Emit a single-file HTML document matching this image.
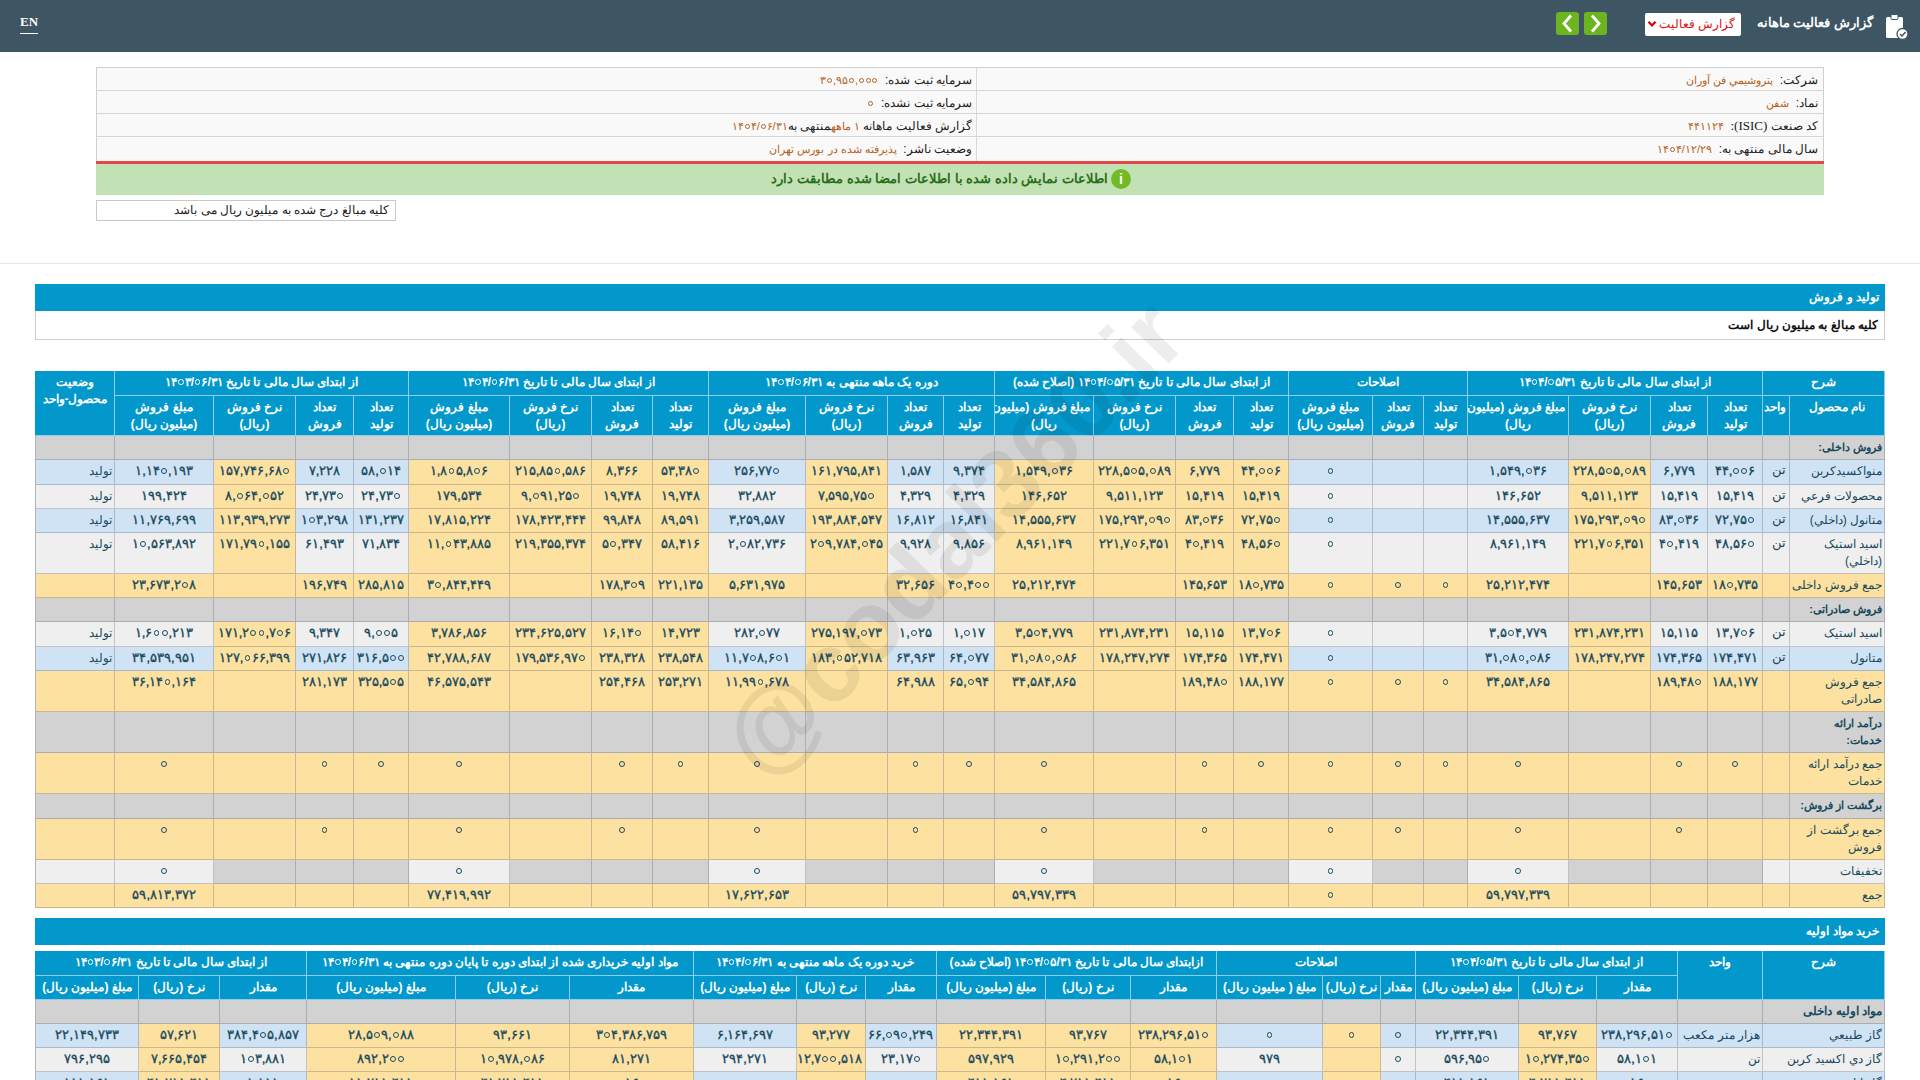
<!DOCTYPE html>
<html lang="fa" dir="rtl"><head><meta charset="utf-8"><title>گزارش فعالیت ماهانه</title>
<style>
*{box-sizing:border-box;margin:0;padding:0}
html,body{width:1920px;height:1080px;overflow:hidden;background:#fff;font-family:"Liberation Sans",sans-serif;}
body{position:relative}
.a{position:absolute}
.c{position:absolute;border-right:1px solid rgba(70,70,95,0.27);border-bottom:1px solid rgba(70,70,95,0.27);overflow:hidden;color:#184a5e;font-size:13px;line-height:17px;padding:3px 3px 0 3px;white-space:nowrap}
.c.h{background:#0398cc;color:#fff;font-weight:bold;border-color:#8fcdea;padding-top:3px;font-size:12px}
.c.n{font-size:13px;font-weight:normal;-webkit-text-stroke:0.35px currentColor;padding-top:2px}
.c.nm{padding-right:2px;font-size:12px}
.c.b{font-weight:bold}
.c.s11{font-size:11px}
.c.u{font-size:13px;padding:1px 3px 0 0;text-align:right!important}
#hdr{left:0;top:0;width:1920px;height:52px;background:#3e5563}
.info{background:#f9f9f9;border:1px solid #cfcfcf}
.ir{position:absolute;height:23px;border-bottom:1px solid #d6d6d6;font-size:13px;line-height:22px;color:#222;white-space:nowrap}
.v{color:#b5611c;font-size:11px}
i.z{display:inline-block;width:.46em;height:.46em;border:.145em solid currentColor;border-radius:50%;margin:0 .08em;vertical-align:.11em}
.it{font-size:12px;line-height:22px;color:#222;white-space:nowrap}
</style></head><body>
<div id="hdr" class="a"></div>
<div class="a" style="left:20px;top:15px;color:#fff;font-family:'Liberation Serif',serif;font-size:13px;font-weight:bold;line-height:14px;padding-bottom:4px;border-bottom:1px solid #fff">EN</div>
<div class="a" style="right:47px;top:13px;color:#fff;font-size:13px;line-height:20px;font-weight:bold;white-space:nowrap">گزارش فعالیت ماهانه</div>
<div class="a" style="left:1645px;top:13px;width:96px;height:23px;background:#fff;border-radius:2px"></div><div class="a" style="right:185px;top:13px;color:#e01010;font-size:12px;line-height:22px;white-space:nowrap">گزارش فعالیت</div>
<svg class="a" style="left:1647px;top:20px" width="10" height="8"><path d="M1.5 1.8 L5 5.5 L8.5 1.8" stroke="#d40000" stroke-width="2.2" fill="none"/></svg>
<div class="a" style="left:1556px;top:12px;width:23px;height:23px;background:#6cb521;border-radius:3px"><svg width="23" height="23"><path d="M15 3.5 L8 11.5 L15 19.5" stroke="#fff" stroke-width="2.8" fill="none"/></svg></div>
<div class="a" style="left:1584px;top:12px;width:23px;height:23px;background:#6cb521;border-radius:3px"><svg width="23" height="23"><path d="M8 3.5 L15 11.5 L8 19.5" stroke="#fff" stroke-width="2.8" fill="none"/></svg></div>
<svg class="a" style="left:1884px;top:13px" width="26" height="28"><rect x="2" y="4" width="17" height="21" rx="1.5" fill="#fff"/><rect x="7" y="1.5" width="7" height="5" rx="1" fill="#fff" stroke="#3e5563" stroke-width="1"/><circle cx="18.5" cy="21" r="5.5" fill="#fff" stroke="#3e5563" stroke-width="1.3"/><path d="M16 21 L18 23 L21.5 19" stroke="#3e5563" stroke-width="1.5" fill="none"/></svg>

<!-- info box -->
<div class="a info" style="left:96px;top:67px;width:1728px;height:95px"></div>
<div class="a" style="left:976px;top:68px;width:1px;height:93px;background:#d9d9d9"></div>
<div class="ir" style="left:97px;top:68px;width:1726px"></div>
<div class="ir" style="left:97px;top:91px;width:1726px"></div>
<div class="ir" style="left:97px;top:114px;width:1726px"></div>
<div class="a it" style="right:102px;top:69px">شرکت: &nbsp;<span class="v">پتروشيمي فن آوران</span></div>
<div class="a it" style="right:102px;top:92px">نماد: &nbsp;<span class="v">شفن</span></div>
<div class="a it" style="right:102px;top:115px">کد صنعت <span style="font-family:'Liberation Serif',serif;font-size:13px">(ISIC):</span> &nbsp;<span class="v">۴۴۱۱۲۴</span></div>
<div class="a it" style="right:102px;top:138px">سال مالی منتهی به: &nbsp;<span class="v"><bdo dir="ltr">۱۴<i class="z"></i>۴/۱۲/۲۹</bdo></span></div>
<div class="a it" style="right:948px;top:69px">سرمایه ثبت شده: &nbsp;<span class="v"><bdo dir="ltr">۳<i class="z"></i>,۹۵<i class="z"></i>,<i class="z"></i><i class="z"></i><i class="z"></i></bdo></span></div>
<div class="a it" style="right:948px;top:92px">سرمایه ثبت نشده: &nbsp;<span class="v"><bdo dir="ltr"><i class="z"></i></bdo></span></div>
<div class="a it" style="right:948px;top:115px">گزارش فعالیت ماهانه <span class="v">۱ ماهه</span>منتهی به<span class="v"><bdo dir="ltr">۱۴<i class="z"></i>۴/<i class="z"></i>۶/۳۱</bdo></span></div>
<div class="a it" style="right:948px;top:138px">وضعیت ناشر: &nbsp;<span class="v">پذیرفته شده در بورس تهران</span></div>
<div class="a" style="left:96px;top:161px;width:1728px;height:3px;background:#e24848"></div>
<div class="a" style="left:96px;top:164px;width:1728px;height:31px;background:#c2e1b5"></div>
<div class="a" style="left:1111px;top:169px;width:20px;height:20px;border-radius:50%;background:#72bb22;color:#fff;font-size:14px;line-height:20px;text-align:center;font-weight:bold">i</div>
<div class="a" style="right:812px;top:169px;font-size:13px;line-height:20px;color:#2a6e18;white-space:nowrap;font-weight:bold">اطلاعات نمایش داده شده با اطلاعات امضا شده مطابقت دارد</div>
<div class="a" style="left:96px;top:200px;width:300px;height:21px;border:1px solid #c9c9c9;background:#fff;font-size:12px;line-height:19px;color:#222;text-align:right;padding-right:6px;white-space:nowrap">کلیه مبالغ درج شده به میلیون ریال می باشد</div>
<div class="a" style="left:0;top:263px;width:1920px;height:1px;background:#e6e6e6"></div>

<!-- section 1 -->
<div class="a" style="left:35px;top:284px;width:1850px;height:27px;background:#0398cc;color:#fff;font-weight:bold;font-size:12px;line-height:27px;text-align:right;padding-right:6px">تولید و فروش</div>
<div class="a" style="left:35px;top:311px;width:1850px;height:29px;border:1px solid #cdcdcd;border-top:0;background:#fff;color:#111;font-weight:bold;font-size:12px;line-height:28px;text-align:right;padding-right:6px">کلیه مبالغ به میلیون ریال است</div>
<div class="a" style="left:35px;top:371px;width:1px;height:64px;background:#0398cc"></div>
<div class="a" style="left:35px;top:435px;width:1px;height:473px;background:#b3b3bd"></div>
<div class="a" style="left:35px;top:951px;width:1px;height:48px;background:#0398cc"></div>
<div class="a" style="left:35px;top:999px;width:1px;height:90px;background:#b3b3bd"></div>
<div class="c h" style="left:1763px;top:371px;width:122px;height:25px;background:#0398cc;text-align:center;">شرح</div><div class="c h" style="left:1468px;top:371px;width:295px;height:25px;background:#0398cc;text-align:center;">از ابتدای سال مالی تا تاریخ <bdo dir="ltr">۱۴<i class="z"></i>۴/<i class="z"></i>۵/۳۱</bdo></div><div class="c h" style="left:1289px;top:371px;width:179px;height:25px;background:#0398cc;text-align:center;">اصلاحات</div><div class="c h" style="left:995px;top:371px;width:294px;height:25px;background:#0398cc;text-align:center;">از ابتدای سال مالی تا تاریخ <bdo dir="ltr">۱۴<i class="z"></i>۴/<i class="z"></i>۵/۳۱</bdo> (اصلاح شده)</div><div class="c h" style="left:709px;top:371px;width:286px;height:25px;background:#0398cc;text-align:center;">دوره یک ماهه منتهی به <bdo dir="ltr">۱۴<i class="z"></i>۴/<i class="z"></i>۶/۳۱</bdo></div><div class="c h" style="left:409px;top:371px;width:300px;height:25px;background:#0398cc;text-align:center;">از ابتدای سال مالی تا تاریخ <bdo dir="ltr">۱۴<i class="z"></i>۴/<i class="z"></i>۶/۳۱</bdo></div><div class="c h" style="left:115px;top:371px;width:294px;height:25px;background:#0398cc;text-align:center;">از ابتدای سال مالی تا تاریخ <bdo dir="ltr">۱۴<i class="z"></i>۳/<i class="z"></i>۶/۳۱</bdo></div><div class="c h" style="left:36px;top:371px;width:79px;height:65px;background:#0398cc;text-align:center;">وضعیت<br>محصول-واحد</div><div class="c h" style="left:1790px;top:396px;width:95px;height:40px;background:#0398cc;text-align:center;">نام محصول</div><div class="c h" style="left:1763px;top:396px;width:27px;height:40px;background:#0398cc;text-align:center;">واحد</div><div class="c h" style="left:1708px;top:396px;width:55px;height:40px;background:#0398cc;text-align:center;">تعداد<br>تولید</div><div class="c h" style="left:1651px;top:396px;width:57px;height:40px;background:#0398cc;text-align:center;">تعداد<br>فروش</div><div class="c h" style="left:1569px;top:396px;width:82px;height:40px;background:#0398cc;text-align:center;">نرخ فروش<br>(ریال)</div><div class="c h" style="left:1468px;top:396px;width:101px;height:40px;background:#0398cc;text-align:center;">مبلغ فروش (میلیون<br>ریال)</div><div class="c h" style="left:1424px;top:396px;width:44px;height:40px;background:#0398cc;text-align:center;">تعداد<br>تولید</div><div class="c h" style="left:1373px;top:396px;width:51px;height:40px;background:#0398cc;text-align:center;">تعداد<br>فروش</div><div class="c h" style="left:1289px;top:396px;width:84px;height:40px;background:#0398cc;text-align:center;">مبلغ فروش<br>(میلیون ریال)</div><div class="c h" style="left:1234px;top:396px;width:55px;height:40px;background:#0398cc;text-align:center;">تعداد<br>تولید</div><div class="c h" style="left:1176px;top:396px;width:58px;height:40px;background:#0398cc;text-align:center;">تعداد<br>فروش</div><div class="c h" style="left:1094px;top:396px;width:82px;height:40px;background:#0398cc;text-align:center;">نرخ فروش<br>(ریال)</div><div class="c h" style="left:995px;top:396px;width:99px;height:40px;background:#0398cc;text-align:center;">مبلغ فروش (میلیون<br>ریال)</div><div class="c h" style="left:944px;top:396px;width:51px;height:40px;background:#0398cc;text-align:center;">تعداد<br>تولید</div><div class="c h" style="left:888px;top:396px;width:56px;height:40px;background:#0398cc;text-align:center;">تعداد<br>فروش</div><div class="c h" style="left:806px;top:396px;width:82px;height:40px;background:#0398cc;text-align:center;">نرخ فروش<br>(ریال)</div><div class="c h" style="left:709px;top:396px;width:97px;height:40px;background:#0398cc;text-align:center;">مبلغ فروش<br>(میلیون ریال)</div><div class="c h" style="left:653px;top:396px;width:56px;height:40px;background:#0398cc;text-align:center;">تعداد<br>تولید</div><div class="c h" style="left:592px;top:396px;width:61px;height:40px;background:#0398cc;text-align:center;">تعداد<br>فروش</div><div class="c h" style="left:510px;top:396px;width:82px;height:40px;background:#0398cc;text-align:center;">نرخ فروش<br>(ریال)</div><div class="c h" style="left:409px;top:396px;width:101px;height:40px;background:#0398cc;text-align:center;">مبلغ فروش<br>(میلیون ریال)</div><div class="c h" style="left:354px;top:396px;width:55px;height:40px;background:#0398cc;text-align:center;">تعداد<br>تولید</div><div class="c h" style="left:296px;top:396px;width:58px;height:40px;background:#0398cc;text-align:center;">تعداد<br>فروش</div><div class="c h" style="left:214px;top:396px;width:82px;height:40px;background:#0398cc;text-align:center;">نرخ فروش<br>(ریال)</div><div class="c h" style="left:115px;top:396px;width:99px;height:40px;background:#0398cc;text-align:center;">مبلغ فروش<br>(میلیون ریال)</div><div class="c nm b s11" style="left:1790px;top:436px;width:95px;height:24px;background:#d2d2d2;text-align:right;">فروش داخلی:</div><div class="c " style="left:1763px;top:436px;width:27px;height:24px;background:#d2d2d2;text-align:center;"></div><div class="c " style="left:1708px;top:436px;width:55px;height:24px;background:#d2d2d2;text-align:center;"></div><div class="c " style="left:1651px;top:436px;width:57px;height:24px;background:#d2d2d2;text-align:center;"></div><div class="c " style="left:1569px;top:436px;width:82px;height:24px;background:#d2d2d2;text-align:center;"></div><div class="c " style="left:1468px;top:436px;width:101px;height:24px;background:#d2d2d2;text-align:center;"></div><div class="c " style="left:1424px;top:436px;width:44px;height:24px;background:#d2d2d2;text-align:center;"></div><div class="c " style="left:1373px;top:436px;width:51px;height:24px;background:#d2d2d2;text-align:center;"></div><div class="c " style="left:1289px;top:436px;width:84px;height:24px;background:#d2d2d2;text-align:center;"></div><div class="c " style="left:1234px;top:436px;width:55px;height:24px;background:#d2d2d2;text-align:center;"></div><div class="c " style="left:1176px;top:436px;width:58px;height:24px;background:#d2d2d2;text-align:center;"></div><div class="c " style="left:1094px;top:436px;width:82px;height:24px;background:#d2d2d2;text-align:center;"></div><div class="c " style="left:995px;top:436px;width:99px;height:24px;background:#d2d2d2;text-align:center;"></div><div class="c " style="left:944px;top:436px;width:51px;height:24px;background:#d2d2d2;text-align:center;"></div><div class="c " style="left:888px;top:436px;width:56px;height:24px;background:#d2d2d2;text-align:center;"></div><div class="c " style="left:806px;top:436px;width:82px;height:24px;background:#d2d2d2;text-align:center;"></div><div class="c " style="left:709px;top:436px;width:97px;height:24px;background:#d2d2d2;text-align:center;"></div><div class="c " style="left:653px;top:436px;width:56px;height:24px;background:#d2d2d2;text-align:center;"></div><div class="c " style="left:592px;top:436px;width:61px;height:24px;background:#d2d2d2;text-align:center;"></div><div class="c " style="left:510px;top:436px;width:82px;height:24px;background:#d2d2d2;text-align:center;"></div><div class="c " style="left:409px;top:436px;width:101px;height:24px;background:#d2d2d2;text-align:center;"></div><div class="c " style="left:354px;top:436px;width:55px;height:24px;background:#d2d2d2;text-align:center;"></div><div class="c " style="left:296px;top:436px;width:58px;height:24px;background:#d2d2d2;text-align:center;"></div><div class="c " style="left:214px;top:436px;width:82px;height:24px;background:#d2d2d2;text-align:center;"></div><div class="c " style="left:115px;top:436px;width:99px;height:24px;background:#d2d2d2;text-align:center;"></div><div class="c " style="left:36px;top:436px;width:79px;height:24px;background:#d2d2d2;text-align:center;"></div><div class="c nm" style="left:1790px;top:460px;width:95px;height:25px;background:#d0e3f5;text-align:right;">منواکسیدکربن</div><div class="c u" style="left:1763px;top:460px;width:27px;height:25px;background:#d0e3f5;text-align:center;">تن</div><div class="c n" style="left:1708px;top:460px;width:55px;height:25px;background:#d0e3f5;text-align:center;"><bdo dir="ltr">۴۴,<i class="z"></i><i class="z"></i>۶</bdo></div><div class="c n" style="left:1651px;top:460px;width:57px;height:25px;background:#d0e3f5;text-align:center;">۶,۷۷۹</div><div class="c n" style="left:1569px;top:460px;width:82px;height:25px;background:#fde1a0;text-align:center;"><bdo dir="ltr">۲۲۸,۵<i class="z"></i>۵,<i class="z"></i>۸۹</bdo></div><div class="c n" style="left:1468px;top:460px;width:101px;height:25px;background:#d0e3f5;text-align:center;"><bdo dir="ltr">۱,۵۴۹,<i class="z"></i>۳۶</bdo></div><div class="c n" style="left:1424px;top:460px;width:44px;height:25px;background:#d0e3f5;text-align:center;"></div><div class="c n" style="left:1373px;top:460px;width:51px;height:25px;background:#d0e3f5;text-align:center;"></div><div class="c n" style="left:1289px;top:460px;width:84px;height:25px;background:#d0e3f5;text-align:center;"><bdo dir="ltr"><i class="z"></i></bdo></div><div class="c n" style="left:1234px;top:460px;width:55px;height:25px;background:#fde1a0;text-align:center;"><bdo dir="ltr">۴۴,<i class="z"></i><i class="z"></i>۶</bdo></div><div class="c n" style="left:1176px;top:460px;width:58px;height:25px;background:#fde1a0;text-align:center;">۶,۷۷۹</div><div class="c n" style="left:1094px;top:460px;width:82px;height:25px;background:#fde1a0;text-align:center;"><bdo dir="ltr">۲۲۸,۵<i class="z"></i>۵,<i class="z"></i>۸۹</bdo></div><div class="c n" style="left:995px;top:460px;width:99px;height:25px;background:#fde1a0;text-align:center;"><bdo dir="ltr">۱,۵۴۹,<i class="z"></i>۳۶</bdo></div><div class="c n" style="left:944px;top:460px;width:51px;height:25px;background:#d0e3f5;text-align:center;">۹,۳۷۴</div><div class="c n" style="left:888px;top:460px;width:56px;height:25px;background:#d0e3f5;text-align:center;">۱,۵۸۷</div><div class="c n" style="left:806px;top:460px;width:82px;height:25px;background:#fde1a0;text-align:center;">۱۶۱,۷۹۵,۸۴۱</div><div class="c n" style="left:709px;top:460px;width:97px;height:25px;background:#d0e3f5;text-align:center;"><bdo dir="ltr">۲۵۶,۷۷<i class="z"></i></bdo></div><div class="c n" style="left:653px;top:460px;width:56px;height:25px;background:#fde1a0;text-align:center;"><bdo dir="ltr">۵۳,۳۸<i class="z"></i></bdo></div><div class="c n" style="left:592px;top:460px;width:61px;height:25px;background:#fde1a0;text-align:center;">۸,۳۶۶</div><div class="c n" style="left:510px;top:460px;width:82px;height:25px;background:#fde1a0;text-align:center;"><bdo dir="ltr">۲۱۵,۸۵<i class="z"></i>,۵۸۶</bdo></div><div class="c n" style="left:409px;top:460px;width:101px;height:25px;background:#fde1a0;text-align:center;"><bdo dir="ltr">۱,۸<i class="z"></i>۵,۸<i class="z"></i>۶</bdo></div><div class="c n" style="left:354px;top:460px;width:55px;height:25px;background:#d0e3f5;text-align:center;"><bdo dir="ltr">۵۸,<i class="z"></i>۱۴</bdo></div><div class="c n" style="left:296px;top:460px;width:58px;height:25px;background:#d0e3f5;text-align:center;">۷,۲۲۸</div><div class="c n" style="left:214px;top:460px;width:82px;height:25px;background:#fde1a0;text-align:center;"><bdo dir="ltr">۱۵۷,۷۴۶,۶۸<i class="z"></i></bdo></div><div class="c n" style="left:115px;top:460px;width:99px;height:25px;background:#d0e3f5;text-align:center;"><bdo dir="ltr">۱,۱۴<i class="z"></i>,۱۹۳</bdo></div><div class="c nm" style="left:36px;top:460px;width:79px;height:25px;background:#d0e3f5;text-align:right;">تولید</div><div class="c nm" style="left:1790px;top:485px;width:95px;height:24px;background:#efefef;text-align:right;">محصولات فرعي</div><div class="c u" style="left:1763px;top:485px;width:27px;height:24px;background:#efefef;text-align:center;">تن</div><div class="c n" style="left:1708px;top:485px;width:55px;height:24px;background:#efefef;text-align:center;">۱۵,۴۱۹</div><div class="c n" style="left:1651px;top:485px;width:57px;height:24px;background:#efefef;text-align:center;">۱۵,۴۱۹</div><div class="c n" style="left:1569px;top:485px;width:82px;height:24px;background:#fde1a0;text-align:center;">۹,۵۱۱,۱۲۳</div><div class="c n" style="left:1468px;top:485px;width:101px;height:24px;background:#efefef;text-align:center;">۱۴۶,۶۵۲</div><div class="c n" style="left:1424px;top:485px;width:44px;height:24px;background:#efefef;text-align:center;"></div><div class="c n" style="left:1373px;top:485px;width:51px;height:24px;background:#efefef;text-align:center;"></div><div class="c n" style="left:1289px;top:485px;width:84px;height:24px;background:#efefef;text-align:center;"><bdo dir="ltr"><i class="z"></i></bdo></div><div class="c n" style="left:1234px;top:485px;width:55px;height:24px;background:#fde1a0;text-align:center;">۱۵,۴۱۹</div><div class="c n" style="left:1176px;top:485px;width:58px;height:24px;background:#fde1a0;text-align:center;">۱۵,۴۱۹</div><div class="c n" style="left:1094px;top:485px;width:82px;height:24px;background:#fde1a0;text-align:center;">۹,۵۱۱,۱۲۳</div><div class="c n" style="left:995px;top:485px;width:99px;height:24px;background:#fde1a0;text-align:center;">۱۴۶,۶۵۲</div><div class="c n" style="left:944px;top:485px;width:51px;height:24px;background:#efefef;text-align:center;">۴,۳۲۹</div><div class="c n" style="left:888px;top:485px;width:56px;height:24px;background:#efefef;text-align:center;">۴,۳۲۹</div><div class="c n" style="left:806px;top:485px;width:82px;height:24px;background:#fde1a0;text-align:center;"><bdo dir="ltr">۷,۵۹۵,۷۵<i class="z"></i></bdo></div><div class="c n" style="left:709px;top:485px;width:97px;height:24px;background:#efefef;text-align:center;">۳۲,۸۸۲</div><div class="c n" style="left:653px;top:485px;width:56px;height:24px;background:#fde1a0;text-align:center;">۱۹,۷۴۸</div><div class="c n" style="left:592px;top:485px;width:61px;height:24px;background:#fde1a0;text-align:center;">۱۹,۷۴۸</div><div class="c n" style="left:510px;top:485px;width:82px;height:24px;background:#fde1a0;text-align:center;"><bdo dir="ltr">۹,<i class="z"></i>۹۱,۲۵<i class="z"></i></bdo></div><div class="c n" style="left:409px;top:485px;width:101px;height:24px;background:#fde1a0;text-align:center;">۱۷۹,۵۳۴</div><div class="c n" style="left:354px;top:485px;width:55px;height:24px;background:#efefef;text-align:center;"><bdo dir="ltr">۲۴,۷۳<i class="z"></i></bdo></div><div class="c n" style="left:296px;top:485px;width:58px;height:24px;background:#efefef;text-align:center;"><bdo dir="ltr">۲۴,۷۳<i class="z"></i></bdo></div><div class="c n" style="left:214px;top:485px;width:82px;height:24px;background:#fde1a0;text-align:center;"><bdo dir="ltr">۸,<i class="z"></i>۶۴,<i class="z"></i>۵۲</bdo></div><div class="c n" style="left:115px;top:485px;width:99px;height:24px;background:#efefef;text-align:center;">۱۹۹,۴۲۴</div><div class="c nm" style="left:36px;top:485px;width:79px;height:24px;background:#efefef;text-align:right;">تولید</div><div class="c nm" style="left:1790px;top:509px;width:95px;height:24px;background:#d0e3f5;text-align:right;">متانول (داخلي)</div><div class="c u" style="left:1763px;top:509px;width:27px;height:24px;background:#d0e3f5;text-align:center;">تن</div><div class="c n" style="left:1708px;top:509px;width:55px;height:24px;background:#d0e3f5;text-align:center;"><bdo dir="ltr">۷۲,۷۵<i class="z"></i></bdo></div><div class="c n" style="left:1651px;top:509px;width:57px;height:24px;background:#d0e3f5;text-align:center;"><bdo dir="ltr">۸۳,<i class="z"></i>۳۶</bdo></div><div class="c n" style="left:1569px;top:509px;width:82px;height:24px;background:#fde1a0;text-align:center;"><bdo dir="ltr">۱۷۵,۲۹۳,<i class="z"></i>۹<i class="z"></i></bdo></div><div class="c n" style="left:1468px;top:509px;width:101px;height:24px;background:#d0e3f5;text-align:center;">۱۴,۵۵۵,۶۳۷</div><div class="c n" style="left:1424px;top:509px;width:44px;height:24px;background:#d0e3f5;text-align:center;"></div><div class="c n" style="left:1373px;top:509px;width:51px;height:24px;background:#d0e3f5;text-align:center;"></div><div class="c n" style="left:1289px;top:509px;width:84px;height:24px;background:#d0e3f5;text-align:center;"><bdo dir="ltr"><i class="z"></i></bdo></div><div class="c n" style="left:1234px;top:509px;width:55px;height:24px;background:#fde1a0;text-align:center;"><bdo dir="ltr">۷۲,۷۵<i class="z"></i></bdo></div><div class="c n" style="left:1176px;top:509px;width:58px;height:24px;background:#fde1a0;text-align:center;"><bdo dir="ltr">۸۳,<i class="z"></i>۳۶</bdo></div><div class="c n" style="left:1094px;top:509px;width:82px;height:24px;background:#fde1a0;text-align:center;"><bdo dir="ltr">۱۷۵,۲۹۳,<i class="z"></i>۹<i class="z"></i></bdo></div><div class="c n" style="left:995px;top:509px;width:99px;height:24px;background:#fde1a0;text-align:center;">۱۴,۵۵۵,۶۳۷</div><div class="c n" style="left:944px;top:509px;width:51px;height:24px;background:#d0e3f5;text-align:center;">۱۶,۸۴۱</div><div class="c n" style="left:888px;top:509px;width:56px;height:24px;background:#d0e3f5;text-align:center;">۱۶,۸۱۲</div><div class="c n" style="left:806px;top:509px;width:82px;height:24px;background:#fde1a0;text-align:center;">۱۹۳,۸۸۴,۵۴۷</div><div class="c n" style="left:709px;top:509px;width:97px;height:24px;background:#d0e3f5;text-align:center;">۳,۲۵۹,۵۸۷</div><div class="c n" style="left:653px;top:509px;width:56px;height:24px;background:#fde1a0;text-align:center;">۸۹,۵۹۱</div><div class="c n" style="left:592px;top:509px;width:61px;height:24px;background:#fde1a0;text-align:center;">۹۹,۸۴۸</div><div class="c n" style="left:510px;top:509px;width:82px;height:24px;background:#fde1a0;text-align:center;">۱۷۸,۴۲۳,۴۴۴</div><div class="c n" style="left:409px;top:509px;width:101px;height:24px;background:#fde1a0;text-align:center;">۱۷,۸۱۵,۲۲۴</div><div class="c n" style="left:354px;top:509px;width:55px;height:24px;background:#d0e3f5;text-align:center;">۱۳۱,۲۳۷</div><div class="c n" style="left:296px;top:509px;width:58px;height:24px;background:#d0e3f5;text-align:center;"><bdo dir="ltr">۱<i class="z"></i>۳,۲۹۸</bdo></div><div class="c n" style="left:214px;top:509px;width:82px;height:24px;background:#fde1a0;text-align:center;">۱۱۳,۹۳۹,۲۷۳</div><div class="c n" style="left:115px;top:509px;width:99px;height:24px;background:#d0e3f5;text-align:center;">۱۱,۷۶۹,۶۹۹</div><div class="c nm" style="left:36px;top:509px;width:79px;height:24px;background:#d0e3f5;text-align:right;">تولید</div><div class="c nm" style="left:1790px;top:533px;width:95px;height:41px;background:#efefef;text-align:right;">اسید استیک<br>(داخلي)</div><div class="c u" style="left:1763px;top:533px;width:27px;height:41px;background:#efefef;text-align:center;">تن</div><div class="c n" style="left:1708px;top:533px;width:55px;height:41px;background:#efefef;text-align:center;"><bdo dir="ltr">۴۸,۵۶<i class="z"></i></bdo></div><div class="c n" style="left:1651px;top:533px;width:57px;height:41px;background:#efefef;text-align:center;"><bdo dir="ltr">۴<i class="z"></i>,۴۱۹</bdo></div><div class="c n" style="left:1569px;top:533px;width:82px;height:41px;background:#fde1a0;text-align:center;"><bdo dir="ltr">۲۲۱,۷<i class="z"></i>۶,۳۵۱</bdo></div><div class="c n" style="left:1468px;top:533px;width:101px;height:41px;background:#efefef;text-align:center;">۸,۹۶۱,۱۴۹</div><div class="c n" style="left:1424px;top:533px;width:44px;height:41px;background:#efefef;text-align:center;"></div><div class="c n" style="left:1373px;top:533px;width:51px;height:41px;background:#efefef;text-align:center;"></div><div class="c n" style="left:1289px;top:533px;width:84px;height:41px;background:#efefef;text-align:center;"><bdo dir="ltr"><i class="z"></i></bdo></div><div class="c n" style="left:1234px;top:533px;width:55px;height:41px;background:#fde1a0;text-align:center;"><bdo dir="ltr">۴۸,۵۶<i class="z"></i></bdo></div><div class="c n" style="left:1176px;top:533px;width:58px;height:41px;background:#fde1a0;text-align:center;"><bdo dir="ltr">۴<i class="z"></i>,۴۱۹</bdo></div><div class="c n" style="left:1094px;top:533px;width:82px;height:41px;background:#fde1a0;text-align:center;"><bdo dir="ltr">۲۲۱,۷<i class="z"></i>۶,۳۵۱</bdo></div><div class="c n" style="left:995px;top:533px;width:99px;height:41px;background:#fde1a0;text-align:center;">۸,۹۶۱,۱۴۹</div><div class="c n" style="left:944px;top:533px;width:51px;height:41px;background:#efefef;text-align:center;">۹,۸۵۶</div><div class="c n" style="left:888px;top:533px;width:56px;height:41px;background:#efefef;text-align:center;">۹,۹۲۸</div><div class="c n" style="left:806px;top:533px;width:82px;height:41px;background:#fde1a0;text-align:center;"><bdo dir="ltr">۲<i class="z"></i>۹,۷۸۴,<i class="z"></i>۴۵</bdo></div><div class="c n" style="left:709px;top:533px;width:97px;height:41px;background:#efefef;text-align:center;"><bdo dir="ltr">۲,<i class="z"></i>۸۲,۷۳۶</bdo></div><div class="c n" style="left:653px;top:533px;width:56px;height:41px;background:#fde1a0;text-align:center;">۵۸,۴۱۶</div><div class="c n" style="left:592px;top:533px;width:61px;height:41px;background:#fde1a0;text-align:center;"><bdo dir="ltr">۵<i class="z"></i>,۳۴۷</bdo></div><div class="c n" style="left:510px;top:533px;width:82px;height:41px;background:#fde1a0;text-align:center;">۲۱۹,۳۵۵,۳۷۴</div><div class="c n" style="left:409px;top:533px;width:101px;height:41px;background:#fde1a0;text-align:center;"><bdo dir="ltr">۱۱,<i class="z"></i>۴۳,۸۸۵</bdo></div><div class="c n" style="left:354px;top:533px;width:55px;height:41px;background:#efefef;text-align:center;">۷۱,۸۳۴</div><div class="c n" style="left:296px;top:533px;width:58px;height:41px;background:#efefef;text-align:center;">۶۱,۴۹۳</div><div class="c n" style="left:214px;top:533px;width:82px;height:41px;background:#fde1a0;text-align:center;"><bdo dir="ltr">۱۷۱,۷۹<i class="z"></i>,۱۵۵</bdo></div><div class="c n" style="left:115px;top:533px;width:99px;height:41px;background:#efefef;text-align:center;"><bdo dir="ltr">۱<i class="z"></i>,۵۶۳,۸۹۲</bdo></div><div class="c nm" style="left:36px;top:533px;width:79px;height:41px;background:#efefef;text-align:right;">تولید</div><div class="c nm" style="left:1790px;top:574px;width:95px;height:24px;background:#fde1a0;text-align:right;">جمع فروش داخلی</div><div class="c u" style="left:1763px;top:574px;width:27px;height:24px;background:#fde1a0;text-align:center;"></div><div class="c n" style="left:1708px;top:574px;width:55px;height:24px;background:#fde1a0;text-align:center;"><bdo dir="ltr">۱۸<i class="z"></i>,۷۳۵</bdo></div><div class="c n" style="left:1651px;top:574px;width:57px;height:24px;background:#fde1a0;text-align:center;">۱۴۵,۶۵۳</div><div class="c n" style="left:1569px;top:574px;width:82px;height:24px;background:#fde1a0;text-align:center;"></div><div class="c n" style="left:1468px;top:574px;width:101px;height:24px;background:#fde1a0;text-align:center;">۲۵,۲۱۲,۴۷۴</div><div class="c n" style="left:1424px;top:574px;width:44px;height:24px;background:#fde1a0;text-align:center;"><bdo dir="ltr"><i class="z"></i></bdo></div><div class="c n" style="left:1373px;top:574px;width:51px;height:24px;background:#fde1a0;text-align:center;"><bdo dir="ltr"><i class="z"></i></bdo></div><div class="c n" style="left:1289px;top:574px;width:84px;height:24px;background:#fde1a0;text-align:center;"><bdo dir="ltr"><i class="z"></i></bdo></div><div class="c n" style="left:1234px;top:574px;width:55px;height:24px;background:#fde1a0;text-align:center;"><bdo dir="ltr">۱۸<i class="z"></i>,۷۳۵</bdo></div><div class="c n" style="left:1176px;top:574px;width:58px;height:24px;background:#fde1a0;text-align:center;">۱۴۵,۶۵۳</div><div class="c n" style="left:1094px;top:574px;width:82px;height:24px;background:#fde1a0;text-align:center;"></div><div class="c n" style="left:995px;top:574px;width:99px;height:24px;background:#fde1a0;text-align:center;">۲۵,۲۱۲,۴۷۴</div><div class="c n" style="left:944px;top:574px;width:51px;height:24px;background:#fde1a0;text-align:center;"><bdo dir="ltr">۴<i class="z"></i>,۴<i class="z"></i><i class="z"></i></bdo></div><div class="c n" style="left:888px;top:574px;width:56px;height:24px;background:#fde1a0;text-align:center;">۳۲,۶۵۶</div><div class="c n" style="left:806px;top:574px;width:82px;height:24px;background:#fde1a0;text-align:center;"></div><div class="c n" style="left:709px;top:574px;width:97px;height:24px;background:#fde1a0;text-align:center;">۵,۶۳۱,۹۷۵</div><div class="c n" style="left:653px;top:574px;width:56px;height:24px;background:#fde1a0;text-align:center;">۲۲۱,۱۳۵</div><div class="c n" style="left:592px;top:574px;width:61px;height:24px;background:#fde1a0;text-align:center;"><bdo dir="ltr">۱۷۸,۳<i class="z"></i>۹</bdo></div><div class="c n" style="left:510px;top:574px;width:82px;height:24px;background:#fde1a0;text-align:center;"></div><div class="c n" style="left:409px;top:574px;width:101px;height:24px;background:#fde1a0;text-align:center;"><bdo dir="ltr">۳<i class="z"></i>,۸۴۴,۴۴۹</bdo></div><div class="c n" style="left:354px;top:574px;width:55px;height:24px;background:#fde1a0;text-align:center;">۲۸۵,۸۱۵</div><div class="c n" style="left:296px;top:574px;width:58px;height:24px;background:#fde1a0;text-align:center;">۱۹۶,۷۴۹</div><div class="c n" style="left:214px;top:574px;width:82px;height:24px;background:#fde1a0;text-align:center;"></div><div class="c n" style="left:115px;top:574px;width:99px;height:24px;background:#fde1a0;text-align:center;"><bdo dir="ltr">۲۳,۶۷۳,۲<i class="z"></i>۸</bdo></div><div class="c nm" style="left:36px;top:574px;width:79px;height:24px;background:#fde1a0;text-align:right;"></div><div class="c nm b s11" style="left:1790px;top:598px;width:95px;height:24px;background:#d2d2d2;text-align:right;">فروش صادراتی:</div><div class="c " style="left:1763px;top:598px;width:27px;height:24px;background:#d2d2d2;text-align:center;"></div><div class="c " style="left:1708px;top:598px;width:55px;height:24px;background:#d2d2d2;text-align:center;"></div><div class="c " style="left:1651px;top:598px;width:57px;height:24px;background:#d2d2d2;text-align:center;"></div><div class="c " style="left:1569px;top:598px;width:82px;height:24px;background:#d2d2d2;text-align:center;"></div><div class="c " style="left:1468px;top:598px;width:101px;height:24px;background:#d2d2d2;text-align:center;"></div><div class="c " style="left:1424px;top:598px;width:44px;height:24px;background:#d2d2d2;text-align:center;"></div><div class="c " style="left:1373px;top:598px;width:51px;height:24px;background:#d2d2d2;text-align:center;"></div><div class="c " style="left:1289px;top:598px;width:84px;height:24px;background:#d2d2d2;text-align:center;"></div><div class="c " style="left:1234px;top:598px;width:55px;height:24px;background:#d2d2d2;text-align:center;"></div><div class="c " style="left:1176px;top:598px;width:58px;height:24px;background:#d2d2d2;text-align:center;"></div><div class="c " style="left:1094px;top:598px;width:82px;height:24px;background:#d2d2d2;text-align:center;"></div><div class="c " style="left:995px;top:598px;width:99px;height:24px;background:#d2d2d2;text-align:center;"></div><div class="c " style="left:944px;top:598px;width:51px;height:24px;background:#d2d2d2;text-align:center;"></div><div class="c " style="left:888px;top:598px;width:56px;height:24px;background:#d2d2d2;text-align:center;"></div><div class="c " style="left:806px;top:598px;width:82px;height:24px;background:#d2d2d2;text-align:center;"></div><div class="c " style="left:709px;top:598px;width:97px;height:24px;background:#d2d2d2;text-align:center;"></div><div class="c " style="left:653px;top:598px;width:56px;height:24px;background:#d2d2d2;text-align:center;"></div><div class="c " style="left:592px;top:598px;width:61px;height:24px;background:#d2d2d2;text-align:center;"></div><div class="c " style="left:510px;top:598px;width:82px;height:24px;background:#d2d2d2;text-align:center;"></div><div class="c " style="left:409px;top:598px;width:101px;height:24px;background:#d2d2d2;text-align:center;"></div><div class="c " style="left:354px;top:598px;width:55px;height:24px;background:#d2d2d2;text-align:center;"></div><div class="c " style="left:296px;top:598px;width:58px;height:24px;background:#d2d2d2;text-align:center;"></div><div class="c " style="left:214px;top:598px;width:82px;height:24px;background:#d2d2d2;text-align:center;"></div><div class="c " style="left:115px;top:598px;width:99px;height:24px;background:#d2d2d2;text-align:center;"></div><div class="c " style="left:36px;top:598px;width:79px;height:24px;background:#d2d2d2;text-align:center;"></div><div class="c nm" style="left:1790px;top:622px;width:95px;height:25px;background:#efefef;text-align:right;">اسید استیک</div><div class="c u" style="left:1763px;top:622px;width:27px;height:25px;background:#efefef;text-align:center;">تن</div><div class="c n" style="left:1708px;top:622px;width:55px;height:25px;background:#efefef;text-align:center;"><bdo dir="ltr">۱۳,۷<i class="z"></i>۶</bdo></div><div class="c n" style="left:1651px;top:622px;width:57px;height:25px;background:#efefef;text-align:center;">۱۵,۱۱۵</div><div class="c n" style="left:1569px;top:622px;width:82px;height:25px;background:#fde1a0;text-align:center;">۲۳۱,۸۷۴,۲۳۱</div><div class="c n" style="left:1468px;top:622px;width:101px;height:25px;background:#efefef;text-align:center;"><bdo dir="ltr">۳,۵<i class="z"></i>۴,۷۷۹</bdo></div><div class="c n" style="left:1424px;top:622px;width:44px;height:25px;background:#efefef;text-align:center;"></div><div class="c n" style="left:1373px;top:622px;width:51px;height:25px;background:#efefef;text-align:center;"></div><div class="c n" style="left:1289px;top:622px;width:84px;height:25px;background:#efefef;text-align:center;"><bdo dir="ltr"><i class="z"></i></bdo></div><div class="c n" style="left:1234px;top:622px;width:55px;height:25px;background:#fde1a0;text-align:center;"><bdo dir="ltr">۱۳,۷<i class="z"></i>۶</bdo></div><div class="c n" style="left:1176px;top:622px;width:58px;height:25px;background:#fde1a0;text-align:center;">۱۵,۱۱۵</div><div class="c n" style="left:1094px;top:622px;width:82px;height:25px;background:#fde1a0;text-align:center;">۲۳۱,۸۷۴,۲۳۱</div><div class="c n" style="left:995px;top:622px;width:99px;height:25px;background:#fde1a0;text-align:center;"><bdo dir="ltr">۳,۵<i class="z"></i>۴,۷۷۹</bdo></div><div class="c n" style="left:944px;top:622px;width:51px;height:25px;background:#efefef;text-align:center;"><bdo dir="ltr">۱,<i class="z"></i>۱۷</bdo></div><div class="c n" style="left:888px;top:622px;width:56px;height:25px;background:#efefef;text-align:center;"><bdo dir="ltr">۱,<i class="z"></i>۲۵</bdo></div><div class="c n" style="left:806px;top:622px;width:82px;height:25px;background:#fde1a0;text-align:center;"><bdo dir="ltr">۲۷۵,۱۹۷,<i class="z"></i>۷۳</bdo></div><div class="c n" style="left:709px;top:622px;width:97px;height:25px;background:#efefef;text-align:center;"><bdo dir="ltr">۲۸۲,<i class="z"></i>۷۷</bdo></div><div class="c n" style="left:653px;top:622px;width:56px;height:25px;background:#fde1a0;text-align:center;">۱۴,۷۲۳</div><div class="c n" style="left:592px;top:622px;width:61px;height:25px;background:#fde1a0;text-align:center;"><bdo dir="ltr">۱۶,۱۴<i class="z"></i></bdo></div><div class="c n" style="left:510px;top:622px;width:82px;height:25px;background:#fde1a0;text-align:center;">۲۳۴,۶۲۵,۵۲۷</div><div class="c n" style="left:409px;top:622px;width:101px;height:25px;background:#fde1a0;text-align:center;">۳,۷۸۶,۸۵۶</div><div class="c n" style="left:354px;top:622px;width:55px;height:25px;background:#efefef;text-align:center;"><bdo dir="ltr">۹,<i class="z"></i><i class="z"></i>۵</bdo></div><div class="c n" style="left:296px;top:622px;width:58px;height:25px;background:#efefef;text-align:center;">۹,۳۴۷</div><div class="c n" style="left:214px;top:622px;width:82px;height:25px;background:#fde1a0;text-align:center;"><bdo dir="ltr">۱۷۱,۲<i class="z"></i><i class="z"></i>,۷<i class="z"></i>۶</bdo></div><div class="c n" style="left:115px;top:622px;width:99px;height:25px;background:#efefef;text-align:center;"><bdo dir="ltr">۱,۶<i class="z"></i><i class="z"></i>,۲۱۳</bdo></div><div class="c nm" style="left:36px;top:622px;width:79px;height:25px;background:#efefef;text-align:right;">تولید</div><div class="c nm" style="left:1790px;top:647px;width:95px;height:24px;background:#d0e3f5;text-align:right;">متانول</div><div class="c u" style="left:1763px;top:647px;width:27px;height:24px;background:#d0e3f5;text-align:center;">تن</div><div class="c n" style="left:1708px;top:647px;width:55px;height:24px;background:#d0e3f5;text-align:center;">۱۷۴,۴۷۱</div><div class="c n" style="left:1651px;top:647px;width:57px;height:24px;background:#d0e3f5;text-align:center;">۱۷۴,۳۶۵</div><div class="c n" style="left:1569px;top:647px;width:82px;height:24px;background:#fde1a0;text-align:center;">۱۷۸,۲۴۷,۲۷۴</div><div class="c n" style="left:1468px;top:647px;width:101px;height:24px;background:#d0e3f5;text-align:center;"><bdo dir="ltr">۳۱,<i class="z"></i>۸<i class="z"></i>,<i class="z"></i>۸۶</bdo></div><div class="c n" style="left:1424px;top:647px;width:44px;height:24px;background:#d0e3f5;text-align:center;"></div><div class="c n" style="left:1373px;top:647px;width:51px;height:24px;background:#d0e3f5;text-align:center;"></div><div class="c n" style="left:1289px;top:647px;width:84px;height:24px;background:#d0e3f5;text-align:center;"><bdo dir="ltr"><i class="z"></i></bdo></div><div class="c n" style="left:1234px;top:647px;width:55px;height:24px;background:#fde1a0;text-align:center;">۱۷۴,۴۷۱</div><div class="c n" style="left:1176px;top:647px;width:58px;height:24px;background:#fde1a0;text-align:center;">۱۷۴,۳۶۵</div><div class="c n" style="left:1094px;top:647px;width:82px;height:24px;background:#fde1a0;text-align:center;">۱۷۸,۲۴۷,۲۷۴</div><div class="c n" style="left:995px;top:647px;width:99px;height:24px;background:#fde1a0;text-align:center;"><bdo dir="ltr">۳۱,<i class="z"></i>۸<i class="z"></i>,<i class="z"></i>۸۶</bdo></div><div class="c n" style="left:944px;top:647px;width:51px;height:24px;background:#d0e3f5;text-align:center;"><bdo dir="ltr">۶۴,<i class="z"></i>۷۷</bdo></div><div class="c n" style="left:888px;top:647px;width:56px;height:24px;background:#d0e3f5;text-align:center;">۶۳,۹۶۳</div><div class="c n" style="left:806px;top:647px;width:82px;height:24px;background:#fde1a0;text-align:center;"><bdo dir="ltr">۱۸۳,<i class="z"></i>۵۲,۷۱۸</bdo></div><div class="c n" style="left:709px;top:647px;width:97px;height:24px;background:#d0e3f5;text-align:center;"><bdo dir="ltr">۱۱,۷<i class="z"></i>۸,۶<i class="z"></i>۱</bdo></div><div class="c n" style="left:653px;top:647px;width:56px;height:24px;background:#fde1a0;text-align:center;">۲۳۸,۵۴۸</div><div class="c n" style="left:592px;top:647px;width:61px;height:24px;background:#fde1a0;text-align:center;">۲۳۸,۳۲۸</div><div class="c n" style="left:510px;top:647px;width:82px;height:24px;background:#fde1a0;text-align:center;"><bdo dir="ltr">۱۷۹,۵۳۶,۹۷<i class="z"></i></bdo></div><div class="c n" style="left:409px;top:647px;width:101px;height:24px;background:#fde1a0;text-align:center;">۴۲,۷۸۸,۶۸۷</div><div class="c n" style="left:354px;top:647px;width:55px;height:24px;background:#d0e3f5;text-align:center;"><bdo dir="ltr">۳۱۶,۵<i class="z"></i><i class="z"></i></bdo></div><div class="c n" style="left:296px;top:647px;width:58px;height:24px;background:#d0e3f5;text-align:center;">۲۷۱,۸۲۶</div><div class="c n" style="left:214px;top:647px;width:82px;height:24px;background:#fde1a0;text-align:center;"><bdo dir="ltr">۱۲۷,<i class="z"></i>۶۶,۳۹۹</bdo></div><div class="c n" style="left:115px;top:647px;width:99px;height:24px;background:#d0e3f5;text-align:center;">۳۴,۵۳۹,۹۵۱</div><div class="c nm" style="left:36px;top:647px;width:79px;height:24px;background:#d0e3f5;text-align:right;">تولید</div><div class="c nm" style="left:1790px;top:671px;width:95px;height:41px;background:#fde1a0;text-align:right;">جمع فروش<br>صادراتی</div><div class="c u" style="left:1763px;top:671px;width:27px;height:41px;background:#fde1a0;text-align:center;"></div><div class="c n" style="left:1708px;top:671px;width:55px;height:41px;background:#fde1a0;text-align:center;">۱۸۸,۱۷۷</div><div class="c n" style="left:1651px;top:671px;width:57px;height:41px;background:#fde1a0;text-align:center;"><bdo dir="ltr">۱۸۹,۴۸<i class="z"></i></bdo></div><div class="c n" style="left:1569px;top:671px;width:82px;height:41px;background:#fde1a0;text-align:center;"></div><div class="c n" style="left:1468px;top:671px;width:101px;height:41px;background:#fde1a0;text-align:center;">۳۴,۵۸۴,۸۶۵</div><div class="c n" style="left:1424px;top:671px;width:44px;height:41px;background:#fde1a0;text-align:center;"><bdo dir="ltr"><i class="z"></i></bdo></div><div class="c n" style="left:1373px;top:671px;width:51px;height:41px;background:#fde1a0;text-align:center;"><bdo dir="ltr"><i class="z"></i></bdo></div><div class="c n" style="left:1289px;top:671px;width:84px;height:41px;background:#fde1a0;text-align:center;"><bdo dir="ltr"><i class="z"></i></bdo></div><div class="c n" style="left:1234px;top:671px;width:55px;height:41px;background:#fde1a0;text-align:center;">۱۸۸,۱۷۷</div><div class="c n" style="left:1176px;top:671px;width:58px;height:41px;background:#fde1a0;text-align:center;"><bdo dir="ltr">۱۸۹,۴۸<i class="z"></i></bdo></div><div class="c n" style="left:1094px;top:671px;width:82px;height:41px;background:#fde1a0;text-align:center;"></div><div class="c n" style="left:995px;top:671px;width:99px;height:41px;background:#fde1a0;text-align:center;">۳۴,۵۸۴,۸۶۵</div><div class="c n" style="left:944px;top:671px;width:51px;height:41px;background:#fde1a0;text-align:center;"><bdo dir="ltr">۶۵,<i class="z"></i>۹۴</bdo></div><div class="c n" style="left:888px;top:671px;width:56px;height:41px;background:#fde1a0;text-align:center;">۶۴,۹۸۸</div><div class="c n" style="left:806px;top:671px;width:82px;height:41px;background:#fde1a0;text-align:center;"></div><div class="c n" style="left:709px;top:671px;width:97px;height:41px;background:#fde1a0;text-align:center;"><bdo dir="ltr">۱۱,۹۹<i class="z"></i>,۶۷۸</bdo></div><div class="c n" style="left:653px;top:671px;width:56px;height:41px;background:#fde1a0;text-align:center;">۲۵۳,۲۷۱</div><div class="c n" style="left:592px;top:671px;width:61px;height:41px;background:#fde1a0;text-align:center;">۲۵۴,۴۶۸</div><div class="c n" style="left:510px;top:671px;width:82px;height:41px;background:#fde1a0;text-align:center;"></div><div class="c n" style="left:409px;top:671px;width:101px;height:41px;background:#fde1a0;text-align:center;">۴۶,۵۷۵,۵۴۳</div><div class="c n" style="left:354px;top:671px;width:55px;height:41px;background:#fde1a0;text-align:center;"><bdo dir="ltr">۳۲۵,۵<i class="z"></i>۵</bdo></div><div class="c n" style="left:296px;top:671px;width:58px;height:41px;background:#fde1a0;text-align:center;">۲۸۱,۱۷۳</div><div class="c n" style="left:214px;top:671px;width:82px;height:41px;background:#fde1a0;text-align:center;"></div><div class="c n" style="left:115px;top:671px;width:99px;height:41px;background:#fde1a0;text-align:center;"><bdo dir="ltr">۳۶,۱۴<i class="z"></i>,۱۶۴</bdo></div><div class="c nm" style="left:36px;top:671px;width:79px;height:41px;background:#fde1a0;text-align:right;"></div><div class="c nm b s11" style="left:1790px;top:712px;width:95px;height:41px;background:#d2d2d2;text-align:right;">درآمد ارائه<br>خدمات:</div><div class="c " style="left:1763px;top:712px;width:27px;height:41px;background:#d2d2d2;text-align:center;"></div><div class="c " style="left:1708px;top:712px;width:55px;height:41px;background:#d2d2d2;text-align:center;"></div><div class="c " style="left:1651px;top:712px;width:57px;height:41px;background:#d2d2d2;text-align:center;"></div><div class="c " style="left:1569px;top:712px;width:82px;height:41px;background:#d2d2d2;text-align:center;"></div><div class="c " style="left:1468px;top:712px;width:101px;height:41px;background:#d2d2d2;text-align:center;"></div><div class="c " style="left:1424px;top:712px;width:44px;height:41px;background:#d2d2d2;text-align:center;"></div><div class="c " style="left:1373px;top:712px;width:51px;height:41px;background:#d2d2d2;text-align:center;"></div><div class="c " style="left:1289px;top:712px;width:84px;height:41px;background:#d2d2d2;text-align:center;"></div><div class="c " style="left:1234px;top:712px;width:55px;height:41px;background:#d2d2d2;text-align:center;"></div><div class="c " style="left:1176px;top:712px;width:58px;height:41px;background:#d2d2d2;text-align:center;"></div><div class="c " style="left:1094px;top:712px;width:82px;height:41px;background:#d2d2d2;text-align:center;"></div><div class="c " style="left:995px;top:712px;width:99px;height:41px;background:#d2d2d2;text-align:center;"></div><div class="c " style="left:944px;top:712px;width:51px;height:41px;background:#d2d2d2;text-align:center;"></div><div class="c " style="left:888px;top:712px;width:56px;height:41px;background:#d2d2d2;text-align:center;"></div><div class="c " style="left:806px;top:712px;width:82px;height:41px;background:#d2d2d2;text-align:center;"></div><div class="c " style="left:709px;top:712px;width:97px;height:41px;background:#d2d2d2;text-align:center;"></div><div class="c " style="left:653px;top:712px;width:56px;height:41px;background:#d2d2d2;text-align:center;"></div><div class="c " style="left:592px;top:712px;width:61px;height:41px;background:#d2d2d2;text-align:center;"></div><div class="c " style="left:510px;top:712px;width:82px;height:41px;background:#d2d2d2;text-align:center;"></div><div class="c " style="left:409px;top:712px;width:101px;height:41px;background:#d2d2d2;text-align:center;"></div><div class="c " style="left:354px;top:712px;width:55px;height:41px;background:#d2d2d2;text-align:center;"></div><div class="c " style="left:296px;top:712px;width:58px;height:41px;background:#d2d2d2;text-align:center;"></div><div class="c " style="left:214px;top:712px;width:82px;height:41px;background:#d2d2d2;text-align:center;"></div><div class="c " style="left:115px;top:712px;width:99px;height:41px;background:#d2d2d2;text-align:center;"></div><div class="c " style="left:36px;top:712px;width:79px;height:41px;background:#d2d2d2;text-align:center;"></div><div class="c nm" style="left:1790px;top:753px;width:95px;height:41px;background:#fde1a0;text-align:right;">جمع درآمد ارائه<br>خدمات</div><div class="c u" style="left:1763px;top:753px;width:27px;height:41px;background:#fde1a0;text-align:center;"></div><div class="c n" style="left:1708px;top:753px;width:55px;height:41px;background:#fde1a0;text-align:center;"><bdo dir="ltr"><i class="z"></i></bdo></div><div class="c n" style="left:1651px;top:753px;width:57px;height:41px;background:#fde1a0;text-align:center;"><bdo dir="ltr"><i class="z"></i></bdo></div><div class="c n" style="left:1569px;top:753px;width:82px;height:41px;background:#fde1a0;text-align:center;"></div><div class="c n" style="left:1468px;top:753px;width:101px;height:41px;background:#fde1a0;text-align:center;"><bdo dir="ltr"><i class="z"></i></bdo></div><div class="c n" style="left:1424px;top:753px;width:44px;height:41px;background:#fde1a0;text-align:center;"><bdo dir="ltr"><i class="z"></i></bdo></div><div class="c n" style="left:1373px;top:753px;width:51px;height:41px;background:#fde1a0;text-align:center;"><bdo dir="ltr"><i class="z"></i></bdo></div><div class="c n" style="left:1289px;top:753px;width:84px;height:41px;background:#fde1a0;text-align:center;"><bdo dir="ltr"><i class="z"></i></bdo></div><div class="c n" style="left:1234px;top:753px;width:55px;height:41px;background:#fde1a0;text-align:center;"><bdo dir="ltr"><i class="z"></i></bdo></div><div class="c n" style="left:1176px;top:753px;width:58px;height:41px;background:#fde1a0;text-align:center;"><bdo dir="ltr"><i class="z"></i></bdo></div><div class="c n" style="left:1094px;top:753px;width:82px;height:41px;background:#fde1a0;text-align:center;"></div><div class="c n" style="left:995px;top:753px;width:99px;height:41px;background:#fde1a0;text-align:center;"><bdo dir="ltr"><i class="z"></i></bdo></div><div class="c n" style="left:944px;top:753px;width:51px;height:41px;background:#fde1a0;text-align:center;"><bdo dir="ltr"><i class="z"></i></bdo></div><div class="c n" style="left:888px;top:753px;width:56px;height:41px;background:#fde1a0;text-align:center;"><bdo dir="ltr"><i class="z"></i></bdo></div><div class="c n" style="left:806px;top:753px;width:82px;height:41px;background:#fde1a0;text-align:center;"></div><div class="c n" style="left:709px;top:753px;width:97px;height:41px;background:#fde1a0;text-align:center;"><bdo dir="ltr"><i class="z"></i></bdo></div><div class="c n" style="left:653px;top:753px;width:56px;height:41px;background:#fde1a0;text-align:center;"><bdo dir="ltr"><i class="z"></i></bdo></div><div class="c n" style="left:592px;top:753px;width:61px;height:41px;background:#fde1a0;text-align:center;"><bdo dir="ltr"><i class="z"></i></bdo></div><div class="c n" style="left:510px;top:753px;width:82px;height:41px;background:#fde1a0;text-align:center;"></div><div class="c n" style="left:409px;top:753px;width:101px;height:41px;background:#fde1a0;text-align:center;"><bdo dir="ltr"><i class="z"></i></bdo></div><div class="c n" style="left:354px;top:753px;width:55px;height:41px;background:#fde1a0;text-align:center;"><bdo dir="ltr"><i class="z"></i></bdo></div><div class="c n" style="left:296px;top:753px;width:58px;height:41px;background:#fde1a0;text-align:center;"><bdo dir="ltr"><i class="z"></i></bdo></div><div class="c n" style="left:214px;top:753px;width:82px;height:41px;background:#fde1a0;text-align:center;"></div><div class="c n" style="left:115px;top:753px;width:99px;height:41px;background:#fde1a0;text-align:center;"><bdo dir="ltr"><i class="z"></i></bdo></div><div class="c nm" style="left:36px;top:753px;width:79px;height:41px;background:#fde1a0;text-align:right;"></div><div class="c nm b s11" style="left:1790px;top:794px;width:95px;height:25px;background:#d2d2d2;text-align:right;">برگشت از فروش:</div><div class="c " style="left:1763px;top:794px;width:27px;height:25px;background:#d2d2d2;text-align:center;"></div><div class="c " style="left:1708px;top:794px;width:55px;height:25px;background:#d2d2d2;text-align:center;"></div><div class="c " style="left:1651px;top:794px;width:57px;height:25px;background:#d2d2d2;text-align:center;"></div><div class="c " style="left:1569px;top:794px;width:82px;height:25px;background:#d2d2d2;text-align:center;"></div><div class="c " style="left:1468px;top:794px;width:101px;height:25px;background:#d2d2d2;text-align:center;"></div><div class="c " style="left:1424px;top:794px;width:44px;height:25px;background:#d2d2d2;text-align:center;"></div><div class="c " style="left:1373px;top:794px;width:51px;height:25px;background:#d2d2d2;text-align:center;"></div><div class="c " style="left:1289px;top:794px;width:84px;height:25px;background:#d2d2d2;text-align:center;"></div><div class="c " style="left:1234px;top:794px;width:55px;height:25px;background:#d2d2d2;text-align:center;"></div><div class="c " style="left:1176px;top:794px;width:58px;height:25px;background:#d2d2d2;text-align:center;"></div><div class="c " style="left:1094px;top:794px;width:82px;height:25px;background:#d2d2d2;text-align:center;"></div><div class="c " style="left:995px;top:794px;width:99px;height:25px;background:#d2d2d2;text-align:center;"></div><div class="c " style="left:944px;top:794px;width:51px;height:25px;background:#d2d2d2;text-align:center;"></div><div class="c " style="left:888px;top:794px;width:56px;height:25px;background:#d2d2d2;text-align:center;"></div><div class="c " style="left:806px;top:794px;width:82px;height:25px;background:#d2d2d2;text-align:center;"></div><div class="c " style="left:709px;top:794px;width:97px;height:25px;background:#d2d2d2;text-align:center;"></div><div class="c " style="left:653px;top:794px;width:56px;height:25px;background:#d2d2d2;text-align:center;"></div><div class="c " style="left:592px;top:794px;width:61px;height:25px;background:#d2d2d2;text-align:center;"></div><div class="c " style="left:510px;top:794px;width:82px;height:25px;background:#d2d2d2;text-align:center;"></div><div class="c " style="left:409px;top:794px;width:101px;height:25px;background:#d2d2d2;text-align:center;"></div><div class="c " style="left:354px;top:794px;width:55px;height:25px;background:#d2d2d2;text-align:center;"></div><div class="c " style="left:296px;top:794px;width:58px;height:25px;background:#d2d2d2;text-align:center;"></div><div class="c " style="left:214px;top:794px;width:82px;height:25px;background:#d2d2d2;text-align:center;"></div><div class="c " style="left:115px;top:794px;width:99px;height:25px;background:#d2d2d2;text-align:center;"></div><div class="c " style="left:36px;top:794px;width:79px;height:25px;background:#d2d2d2;text-align:center;"></div><div class="c nm" style="left:1790px;top:819px;width:95px;height:41px;background:#fde1a0;text-align:right;">جمع برگشت از<br>فروش</div><div class="c u" style="left:1763px;top:819px;width:27px;height:41px;background:#fde1a0;text-align:center;"></div><div class="c n" style="left:1708px;top:819px;width:55px;height:41px;background:#fde1a0;text-align:center;"></div><div class="c n" style="left:1651px;top:819px;width:57px;height:41px;background:#fde1a0;text-align:center;"><bdo dir="ltr"><i class="z"></i></bdo></div><div class="c n" style="left:1569px;top:819px;width:82px;height:41px;background:#fde1a0;text-align:center;"></div><div class="c n" style="left:1468px;top:819px;width:101px;height:41px;background:#fde1a0;text-align:center;"><bdo dir="ltr"><i class="z"></i></bdo></div><div class="c n" style="left:1424px;top:819px;width:44px;height:41px;background:#fde1a0;text-align:center;"></div><div class="c n" style="left:1373px;top:819px;width:51px;height:41px;background:#fde1a0;text-align:center;"><bdo dir="ltr"><i class="z"></i></bdo></div><div class="c n" style="left:1289px;top:819px;width:84px;height:41px;background:#fde1a0;text-align:center;"><bdo dir="ltr"><i class="z"></i></bdo></div><div class="c n" style="left:1234px;top:819px;width:55px;height:41px;background:#fde1a0;text-align:center;"></div><div class="c n" style="left:1176px;top:819px;width:58px;height:41px;background:#fde1a0;text-align:center;"><bdo dir="ltr"><i class="z"></i></bdo></div><div class="c n" style="left:1094px;top:819px;width:82px;height:41px;background:#fde1a0;text-align:center;"></div><div class="c n" style="left:995px;top:819px;width:99px;height:41px;background:#fde1a0;text-align:center;"><bdo dir="ltr"><i class="z"></i></bdo></div><div class="c n" style="left:944px;top:819px;width:51px;height:41px;background:#fde1a0;text-align:center;"></div><div class="c n" style="left:888px;top:819px;width:56px;height:41px;background:#fde1a0;text-align:center;"><bdo dir="ltr"><i class="z"></i></bdo></div><div class="c n" style="left:806px;top:819px;width:82px;height:41px;background:#fde1a0;text-align:center;"></div><div class="c n" style="left:709px;top:819px;width:97px;height:41px;background:#fde1a0;text-align:center;"><bdo dir="ltr"><i class="z"></i></bdo></div><div class="c n" style="left:653px;top:819px;width:56px;height:41px;background:#fde1a0;text-align:center;"></div><div class="c n" style="left:592px;top:819px;width:61px;height:41px;background:#fde1a0;text-align:center;"><bdo dir="ltr"><i class="z"></i></bdo></div><div class="c n" style="left:510px;top:819px;width:82px;height:41px;background:#fde1a0;text-align:center;"></div><div class="c n" style="left:409px;top:819px;width:101px;height:41px;background:#fde1a0;text-align:center;"><bdo dir="ltr"><i class="z"></i></bdo></div><div class="c n" style="left:354px;top:819px;width:55px;height:41px;background:#fde1a0;text-align:center;"></div><div class="c n" style="left:296px;top:819px;width:58px;height:41px;background:#fde1a0;text-align:center;"><bdo dir="ltr"><i class="z"></i></bdo></div><div class="c n" style="left:214px;top:819px;width:82px;height:41px;background:#fde1a0;text-align:center;"></div><div class="c n" style="left:115px;top:819px;width:99px;height:41px;background:#fde1a0;text-align:center;"><bdo dir="ltr"><i class="z"></i></bdo></div><div class="c nm" style="left:36px;top:819px;width:79px;height:41px;background:#fde1a0;text-align:right;"></div><div class="c nm" style="left:1790px;top:860px;width:95px;height:24px;background:#efefef;text-align:right;">تخفیفات</div><div class="c u" style="left:1763px;top:860px;width:27px;height:24px;background:#efefef;text-align:center;"></div><div class="c n" style="left:1708px;top:860px;width:55px;height:24px;background:#d2d2d2;text-align:center;"></div><div class="c n" style="left:1651px;top:860px;width:57px;height:24px;background:#d2d2d2;text-align:center;"></div><div class="c n" style="left:1569px;top:860px;width:82px;height:24px;background:#d2d2d2;text-align:center;"></div><div class="c n" style="left:1468px;top:860px;width:101px;height:24px;background:#efefef;text-align:center;"><bdo dir="ltr"><i class="z"></i></bdo></div><div class="c n" style="left:1424px;top:860px;width:44px;height:24px;background:#d2d2d2;text-align:center;"></div><div class="c n" style="left:1373px;top:860px;width:51px;height:24px;background:#d2d2d2;text-align:center;"></div><div class="c n" style="left:1289px;top:860px;width:84px;height:24px;background:#efefef;text-align:center;"><bdo dir="ltr"><i class="z"></i></bdo></div><div class="c n" style="left:1234px;top:860px;width:55px;height:24px;background:#d2d2d2;text-align:center;"></div><div class="c n" style="left:1176px;top:860px;width:58px;height:24px;background:#d2d2d2;text-align:center;"></div><div class="c n" style="left:1094px;top:860px;width:82px;height:24px;background:#d2d2d2;text-align:center;"></div><div class="c n" style="left:995px;top:860px;width:99px;height:24px;background:#efefef;text-align:center;"><bdo dir="ltr"><i class="z"></i></bdo></div><div class="c n" style="left:944px;top:860px;width:51px;height:24px;background:#d2d2d2;text-align:center;"></div><div class="c n" style="left:888px;top:860px;width:56px;height:24px;background:#d2d2d2;text-align:center;"></div><div class="c n" style="left:806px;top:860px;width:82px;height:24px;background:#d2d2d2;text-align:center;"></div><div class="c n" style="left:709px;top:860px;width:97px;height:24px;background:#efefef;text-align:center;"><bdo dir="ltr"><i class="z"></i></bdo></div><div class="c n" style="left:653px;top:860px;width:56px;height:24px;background:#d2d2d2;text-align:center;"></div><div class="c n" style="left:592px;top:860px;width:61px;height:24px;background:#d2d2d2;text-align:center;"></div><div class="c n" style="left:510px;top:860px;width:82px;height:24px;background:#d2d2d2;text-align:center;"></div><div class="c n" style="left:409px;top:860px;width:101px;height:24px;background:#efefef;text-align:center;"><bdo dir="ltr"><i class="z"></i></bdo></div><div class="c n" style="left:354px;top:860px;width:55px;height:24px;background:#d2d2d2;text-align:center;"></div><div class="c n" style="left:296px;top:860px;width:58px;height:24px;background:#d2d2d2;text-align:center;"></div><div class="c n" style="left:214px;top:860px;width:82px;height:24px;background:#d2d2d2;text-align:center;"></div><div class="c n" style="left:115px;top:860px;width:99px;height:24px;background:#efefef;text-align:center;"><bdo dir="ltr"><i class="z"></i></bdo></div><div class="c nm" style="left:36px;top:860px;width:79px;height:24px;background:#efefef;text-align:right;"></div><div class="c nm" style="left:1790px;top:884px;width:95px;height:24px;background:#fde1a0;text-align:right;">جمع</div><div class="c u" style="left:1763px;top:884px;width:27px;height:24px;background:#fde1a0;text-align:center;"></div><div class="c n" style="left:1708px;top:884px;width:55px;height:24px;background:#fde1a0;text-align:center;"></div><div class="c n" style="left:1651px;top:884px;width:57px;height:24px;background:#fde1a0;text-align:center;"></div><div class="c n" style="left:1569px;top:884px;width:82px;height:24px;background:#fde1a0;text-align:center;"></div><div class="c n" style="left:1468px;top:884px;width:101px;height:24px;background:#fde1a0;text-align:center;">۵۹,۷۹۷,۳۳۹</div><div class="c n" style="left:1424px;top:884px;width:44px;height:24px;background:#fde1a0;text-align:center;"></div><div class="c n" style="left:1373px;top:884px;width:51px;height:24px;background:#fde1a0;text-align:center;"></div><div class="c n" style="left:1289px;top:884px;width:84px;height:24px;background:#fde1a0;text-align:center;"><bdo dir="ltr"><i class="z"></i></bdo></div><div class="c n" style="left:1234px;top:884px;width:55px;height:24px;background:#fde1a0;text-align:center;"></div><div class="c n" style="left:1176px;top:884px;width:58px;height:24px;background:#fde1a0;text-align:center;"></div><div class="c n" style="left:1094px;top:884px;width:82px;height:24px;background:#fde1a0;text-align:center;"></div><div class="c n" style="left:995px;top:884px;width:99px;height:24px;background:#fde1a0;text-align:center;">۵۹,۷۹۷,۳۳۹</div><div class="c n" style="left:944px;top:884px;width:51px;height:24px;background:#fde1a0;text-align:center;"></div><div class="c n" style="left:888px;top:884px;width:56px;height:24px;background:#fde1a0;text-align:center;"></div><div class="c n" style="left:806px;top:884px;width:82px;height:24px;background:#fde1a0;text-align:center;"></div><div class="c n" style="left:709px;top:884px;width:97px;height:24px;background:#fde1a0;text-align:center;">۱۷,۶۲۲,۶۵۳</div><div class="c n" style="left:653px;top:884px;width:56px;height:24px;background:#fde1a0;text-align:center;"></div><div class="c n" style="left:592px;top:884px;width:61px;height:24px;background:#fde1a0;text-align:center;"></div><div class="c n" style="left:510px;top:884px;width:82px;height:24px;background:#fde1a0;text-align:center;"></div><div class="c n" style="left:409px;top:884px;width:101px;height:24px;background:#fde1a0;text-align:center;">۷۷,۴۱۹,۹۹۲</div><div class="c n" style="left:354px;top:884px;width:55px;height:24px;background:#fde1a0;text-align:center;"></div><div class="c n" style="left:296px;top:884px;width:58px;height:24px;background:#fde1a0;text-align:center;"></div><div class="c n" style="left:214px;top:884px;width:82px;height:24px;background:#fde1a0;text-align:center;"></div><div class="c n" style="left:115px;top:884px;width:99px;height:24px;background:#fde1a0;text-align:center;">۵۹,۸۱۳,۳۷۲</div><div class="c nm" style="left:36px;top:884px;width:79px;height:24px;background:#fde1a0;text-align:right;"></div><div class="c h" style="left:1763px;top:951px;width:122px;height:49px;background:#0398cc;text-align:center;">شرح</div><div class="c h" style="left:1678px;top:951px;width:85px;height:49px;background:#0398cc;text-align:center;">واحد</div><div class="c h" style="left:1416px;top:951px;width:262px;height:25px;background:#0398cc;text-align:center;">از ابتدای سال مالی تا تاریخ <bdo dir="ltr">۱۴<i class="z"></i>۴/<i class="z"></i>۵/۳۱</bdo></div><div class="c h" style="left:1217px;top:951px;width:199px;height:25px;background:#0398cc;text-align:center;">اصلاحات</div><div class="c h" style="left:937px;top:951px;width:280px;height:25px;background:#0398cc;text-align:center;">ازابتدای سال مالی تا تاریخ <bdo dir="ltr">۱۴<i class="z"></i>۴/<i class="z"></i>۵/۳۱</bdo> (اصلاح شده)</div><div class="c h" style="left:694px;top:951px;width:243px;height:25px;background:#0398cc;text-align:center;">خرید دوره یک ماهه منتهی به <bdo dir="ltr">۱۴<i class="z"></i>۴/<i class="z"></i>۶/۳۱</bdo></div><div class="c h" style="left:307px;top:951px;width:387px;height:25px;background:#0398cc;text-align:center;">مواد اولیه خریداری شده از ابتدای دوره تا پایان دوره منتهی به <bdo dir="ltr">۱۴<i class="z"></i>۴/<i class="z"></i>۶/۳۱</bdo></div><div class="c h" style="left:36px;top:951px;width:271px;height:25px;background:#0398cc;text-align:center;">از ابتدای سال مالی تا تاریخ <bdo dir="ltr">۱۴<i class="z"></i>۳/<i class="z"></i>۶/۳۱</bdo></div><div class="c h" style="left:1597px;top:976px;width:81px;height:24px;background:#0398cc;text-align:center;">مقدار</div><div class="c h" style="left:1519px;top:976px;width:78px;height:24px;background:#0398cc;text-align:center;">نرخ (ریال)</div><div class="c h" style="left:1416px;top:976px;width:103px;height:24px;background:#0398cc;text-align:center;">مبلغ (میلیون ریال)</div><div class="c h" style="left:1381px;top:976px;width:35px;height:24px;background:#0398cc;text-align:center;">مقدار</div><div class="c h" style="left:1323px;top:976px;width:58px;height:24px;background:#0398cc;text-align:center;">نرخ (ریال)</div><div class="c h" style="left:1217px;top:976px;width:106px;height:24px;background:#0398cc;text-align:center;">مبلغ ( میلیون ریال)</div><div class="c h" style="left:1131px;top:976px;width:86px;height:24px;background:#0398cc;text-align:center;">مقدار</div><div class="c h" style="left:1046px;top:976px;width:85px;height:24px;background:#0398cc;text-align:center;">نرخ (ریال)</div><div class="c h" style="left:937px;top:976px;width:109px;height:24px;background:#0398cc;text-align:center;">مبلغ (میلیون ریال)</div><div class="c h" style="left:866px;top:976px;width:71px;height:24px;background:#0398cc;text-align:center;">مقدار</div><div class="c h" style="left:797px;top:976px;width:69px;height:24px;background:#0398cc;text-align:center;">نرخ (ریال)</div><div class="c h" style="left:694px;top:976px;width:103px;height:24px;background:#0398cc;text-align:center;">مبلغ (میلیون ریال)</div><div class="c h" style="left:570px;top:976px;width:124px;height:24px;background:#0398cc;text-align:center;">مقدار</div><div class="c h" style="left:456px;top:976px;width:114px;height:24px;background:#0398cc;text-align:center;">نرخ (ریال)</div><div class="c h" style="left:307px;top:976px;width:149px;height:24px;background:#0398cc;text-align:center;">مبلغ (میلیون ریال)</div><div class="c h" style="left:220px;top:976px;width:87px;height:24px;background:#0398cc;text-align:center;">مقدار</div><div class="c h" style="left:139px;top:976px;width:81px;height:24px;background:#0398cc;text-align:center;">نرخ (ریال)</div><div class="c h" style="left:36px;top:976px;width:103px;height:24px;background:#0398cc;text-align:center;">مبلغ (میلیون ریال)</div><div class="c nm b" style="left:1763px;top:1000px;width:122px;height:24px;background:#d2d2d2;text-align:right;">مواد اولیه داخلی</div><div class="c " style="left:1678px;top:1000px;width:85px;height:24px;background:#d2d2d2;text-align:center;"></div><div class="c " style="left:1597px;top:1000px;width:81px;height:24px;background:#d2d2d2;text-align:center;"></div><div class="c " style="left:1519px;top:1000px;width:78px;height:24px;background:#d2d2d2;text-align:center;"></div><div class="c " style="left:1416px;top:1000px;width:103px;height:24px;background:#d2d2d2;text-align:center;"></div><div class="c " style="left:1381px;top:1000px;width:35px;height:24px;background:#d2d2d2;text-align:center;"></div><div class="c " style="left:1323px;top:1000px;width:58px;height:24px;background:#d2d2d2;text-align:center;"></div><div class="c " style="left:1217px;top:1000px;width:106px;height:24px;background:#d2d2d2;text-align:center;"></div><div class="c " style="left:1131px;top:1000px;width:86px;height:24px;background:#d2d2d2;text-align:center;"></div><div class="c " style="left:1046px;top:1000px;width:85px;height:24px;background:#d2d2d2;text-align:center;"></div><div class="c " style="left:937px;top:1000px;width:109px;height:24px;background:#d2d2d2;text-align:center;"></div><div class="c " style="left:866px;top:1000px;width:71px;height:24px;background:#d2d2d2;text-align:center;"></div><div class="c " style="left:797px;top:1000px;width:69px;height:24px;background:#d2d2d2;text-align:center;"></div><div class="c " style="left:694px;top:1000px;width:103px;height:24px;background:#d2d2d2;text-align:center;"></div><div class="c " style="left:570px;top:1000px;width:124px;height:24px;background:#d2d2d2;text-align:center;"></div><div class="c " style="left:456px;top:1000px;width:114px;height:24px;background:#d2d2d2;text-align:center;"></div><div class="c " style="left:307px;top:1000px;width:149px;height:24px;background:#d2d2d2;text-align:center;"></div><div class="c " style="left:220px;top:1000px;width:87px;height:24px;background:#d2d2d2;text-align:center;"></div><div class="c " style="left:139px;top:1000px;width:81px;height:24px;background:#d2d2d2;text-align:center;"></div><div class="c " style="left:36px;top:1000px;width:103px;height:24px;background:#d2d2d2;text-align:center;"></div><div class="c nm" style="left:1763px;top:1024px;width:122px;height:24px;background:#d0e3f5;text-align:right;">گاز طبیعي</div><div class="c nm" style="left:1678px;top:1024px;width:85px;height:24px;background:#d0e3f5;text-align:right;">هزار متر مکعب</div><div class="c n" style="left:1597px;top:1024px;width:81px;height:24px;background:#d0e3f5;text-align:center;"><bdo dir="ltr">۲۳۸,۲۹۶,۵۱<i class="z"></i></bdo></div><div class="c n" style="left:1519px;top:1024px;width:78px;height:24px;background:#fde1a0;text-align:center;">۹۳,۷۶۷</div><div class="c n" style="left:1416px;top:1024px;width:103px;height:24px;background:#d0e3f5;text-align:center;">۲۲,۳۴۴,۳۹۱</div><div class="c n" style="left:1381px;top:1024px;width:35px;height:24px;background:#d0e3f5;text-align:center;"><bdo dir="ltr"><i class="z"></i></bdo></div><div class="c n" style="left:1323px;top:1024px;width:58px;height:24px;background:#fde1a0;text-align:center;"><bdo dir="ltr"><i class="z"></i></bdo></div><div class="c n" style="left:1217px;top:1024px;width:106px;height:24px;background:#d0e3f5;text-align:center;"><bdo dir="ltr"><i class="z"></i></bdo></div><div class="c n" style="left:1131px;top:1024px;width:86px;height:24px;background:#fde1a0;text-align:center;"><bdo dir="ltr">۲۳۸,۲۹۶,۵۱<i class="z"></i></bdo></div><div class="c n" style="left:1046px;top:1024px;width:85px;height:24px;background:#fde1a0;text-align:center;">۹۳,۷۶۷</div><div class="c n" style="left:937px;top:1024px;width:109px;height:24px;background:#fde1a0;text-align:center;">۲۲,۳۴۴,۳۹۱</div><div class="c n" style="left:866px;top:1024px;width:71px;height:24px;background:#d0e3f5;text-align:center;"><bdo dir="ltr">۶۶,<i class="z"></i>۹<i class="z"></i>,۲۴۹</bdo></div><div class="c n" style="left:797px;top:1024px;width:69px;height:24px;background:#fde1a0;text-align:center;">۹۳,۲۷۷</div><div class="c n" style="left:694px;top:1024px;width:103px;height:24px;background:#d0e3f5;text-align:center;">۶,۱۶۴,۶۹۷</div><div class="c n" style="left:570px;top:1024px;width:124px;height:24px;background:#fde1a0;text-align:center;"><bdo dir="ltr">۳<i class="z"></i>۴,۳۸۶,۷۵۹</bdo></div><div class="c n" style="left:456px;top:1024px;width:114px;height:24px;background:#fde1a0;text-align:center;">۹۳,۶۶۱</div><div class="c n" style="left:307px;top:1024px;width:149px;height:24px;background:#fde1a0;text-align:center;"><bdo dir="ltr">۲۸,۵<i class="z"></i>۹,<i class="z"></i>۸۸</bdo></div><div class="c n" style="left:220px;top:1024px;width:87px;height:24px;background:#d0e3f5;text-align:center;"><bdo dir="ltr">۳۸۴,۴<i class="z"></i>۵,۸۵۷</bdo></div><div class="c n" style="left:139px;top:1024px;width:81px;height:24px;background:#fde1a0;text-align:center;">۵۷,۶۲۱</div><div class="c n" style="left:36px;top:1024px;width:103px;height:24px;background:#d0e3f5;text-align:center;">۲۲,۱۴۹,۷۳۳</div><div class="c nm" style="left:1763px;top:1048px;width:122px;height:24px;background:#efefef;text-align:right;">گاز دي اکسید کربن</div><div class="c nm" style="left:1678px;top:1048px;width:85px;height:24px;background:#efefef;text-align:right;">تن</div><div class="c n" style="left:1597px;top:1048px;width:81px;height:24px;background:#efefef;text-align:center;"><bdo dir="ltr">۵۸,۱<i class="z"></i>۱</bdo></div><div class="c n" style="left:1519px;top:1048px;width:78px;height:24px;background:#fde1a0;text-align:center;"><bdo dir="ltr">۱<i class="z"></i>,۲۷۴,۳۵<i class="z"></i></bdo></div><div class="c n" style="left:1416px;top:1048px;width:103px;height:24px;background:#efefef;text-align:center;"><bdo dir="ltr">۵۹۶,۹۵<i class="z"></i></bdo></div><div class="c n" style="left:1381px;top:1048px;width:35px;height:24px;background:#efefef;text-align:center;"><bdo dir="ltr"><i class="z"></i></bdo></div><div class="c n" style="left:1323px;top:1048px;width:58px;height:24px;background:#fde1a0;text-align:center;"></div><div class="c n" style="left:1217px;top:1048px;width:106px;height:24px;background:#efefef;text-align:center;">۹۷۹</div><div class="c n" style="left:1131px;top:1048px;width:86px;height:24px;background:#fde1a0;text-align:center;"><bdo dir="ltr">۵۸,۱<i class="z"></i>۱</bdo></div><div class="c n" style="left:1046px;top:1048px;width:85px;height:24px;background:#fde1a0;text-align:center;"><bdo dir="ltr">۱<i class="z"></i>,۲۹۱,۲<i class="z"></i><i class="z"></i></bdo></div><div class="c n" style="left:937px;top:1048px;width:109px;height:24px;background:#fde1a0;text-align:center;">۵۹۷,۹۲۹</div><div class="c n" style="left:866px;top:1048px;width:71px;height:24px;background:#efefef;text-align:center;"><bdo dir="ltr">۲۳,۱۷<i class="z"></i></bdo></div><div class="c n" style="left:797px;top:1048px;width:69px;height:24px;background:#fde1a0;text-align:center;"><bdo dir="ltr">۱۲,۷<i class="z"></i><i class="z"></i>,۵۱۸</bdo></div><div class="c n" style="left:694px;top:1048px;width:103px;height:24px;background:#efefef;text-align:center;">۲۹۴,۲۷۱</div><div class="c n" style="left:570px;top:1048px;width:124px;height:24px;background:#fde1a0;text-align:center;">۸۱,۲۷۱</div><div class="c n" style="left:456px;top:1048px;width:114px;height:24px;background:#fde1a0;text-align:center;"><bdo dir="ltr">۱<i class="z"></i>,۹۷۸,<i class="z"></i>۸۶</bdo></div><div class="c n" style="left:307px;top:1048px;width:149px;height:24px;background:#fde1a0;text-align:center;"><bdo dir="ltr">۸۹۲,۲<i class="z"></i><i class="z"></i></bdo></div><div class="c n" style="left:220px;top:1048px;width:87px;height:24px;background:#efefef;text-align:center;"><bdo dir="ltr">۱<i class="z"></i>۳,۸۸۱</bdo></div><div class="c n" style="left:139px;top:1048px;width:81px;height:24px;background:#fde1a0;text-align:center;">۷,۶۶۵,۴۵۴</div><div class="c n" style="left:36px;top:1048px;width:103px;height:24px;background:#efefef;text-align:center;">۷۹۶,۲۹۵</div><div class="c nm" style="left:1763px;top:1072px;width:122px;height:24px;background:#d0e3f5;text-align:right;">گاز اتان</div><div class="c nm" style="left:1678px;top:1072px;width:85px;height:24px;background:#d0e3f5;text-align:right;">تن</div><div class="c n" style="left:1597px;top:1072px;width:81px;height:24px;background:#d0e3f5;text-align:center;">۱۶</div><div class="c n" style="left:1519px;top:1072px;width:78px;height:24px;background:#fde1a0;text-align:center;">۴,۲۱۱,۴۱۱</div><div class="c n" style="left:1416px;top:1072px;width:103px;height:24px;background:#d0e3f5;text-align:center;">۴۱۱,۱۶۱</div><div class="c n" style="left:1381px;top:1072px;width:35px;height:24px;background:#d0e3f5;text-align:center;"></div><div class="c n" style="left:1323px;top:1072px;width:58px;height:24px;background:#fde1a0;text-align:center;"></div><div class="c n" style="left:1217px;top:1072px;width:106px;height:24px;background:#d0e3f5;text-align:center;"></div><div class="c n" style="left:1131px;top:1072px;width:86px;height:24px;background:#fde1a0;text-align:center;">۱۶</div><div class="c n" style="left:1046px;top:1072px;width:85px;height:24px;background:#fde1a0;text-align:center;">۴,۲۱۱,۴۱۱</div><div class="c n" style="left:937px;top:1072px;width:109px;height:24px;background:#fde1a0;text-align:center;">۴۱۱,۱۶۱</div><div class="c n" style="left:866px;top:1072px;width:71px;height:24px;background:#d0e3f5;text-align:center;"></div><div class="c n" style="left:797px;top:1072px;width:69px;height:24px;background:#fde1a0;text-align:center;"></div><div class="c n" style="left:694px;top:1072px;width:103px;height:24px;background:#d0e3f5;text-align:center;"></div><div class="c n" style="left:570px;top:1072px;width:124px;height:24px;background:#fde1a0;text-align:center;">۱۶</div><div class="c n" style="left:456px;top:1072px;width:114px;height:24px;background:#fde1a0;text-align:center;">۴۱,۲۱۱,۴۱۱</div><div class="c n" style="left:307px;top:1072px;width:149px;height:24px;background:#fde1a0;text-align:center;">۱۱,۲۱۱,۴۱۱</div><div class="c n" style="left:220px;top:1072px;width:87px;height:24px;background:#d0e3f5;text-align:center;">۱,۱۱۱</div><div class="c n" style="left:139px;top:1072px;width:81px;height:24px;background:#fde1a0;text-align:center;">۴۱,۲۱۱,۴۱۱</div><div class="c n" style="left:36px;top:1072px;width:103px;height:24px;background:#d0e3f5;text-align:center;">۱۱۱,۱۶۱</div>
<div class="a" style="left:35px;top:918px;width:1850px;height:27px;background:#0398cc;color:#fff;font-weight:bold;font-size:12px;line-height:27px;text-align:right;padding-right:6px">خرید مواد اولیه</div>
<div class="a" style="left:603px;top:478px;width:700px;height:120px;transform:rotate(-46deg);color:rgba(0,0,0,0.07);font-size:99px;line-height:120px;font-weight:bold;text-align:center;white-space:nowrap;direction:ltr;pointer-events:none">@codal360.ir</div>
</body></html>
